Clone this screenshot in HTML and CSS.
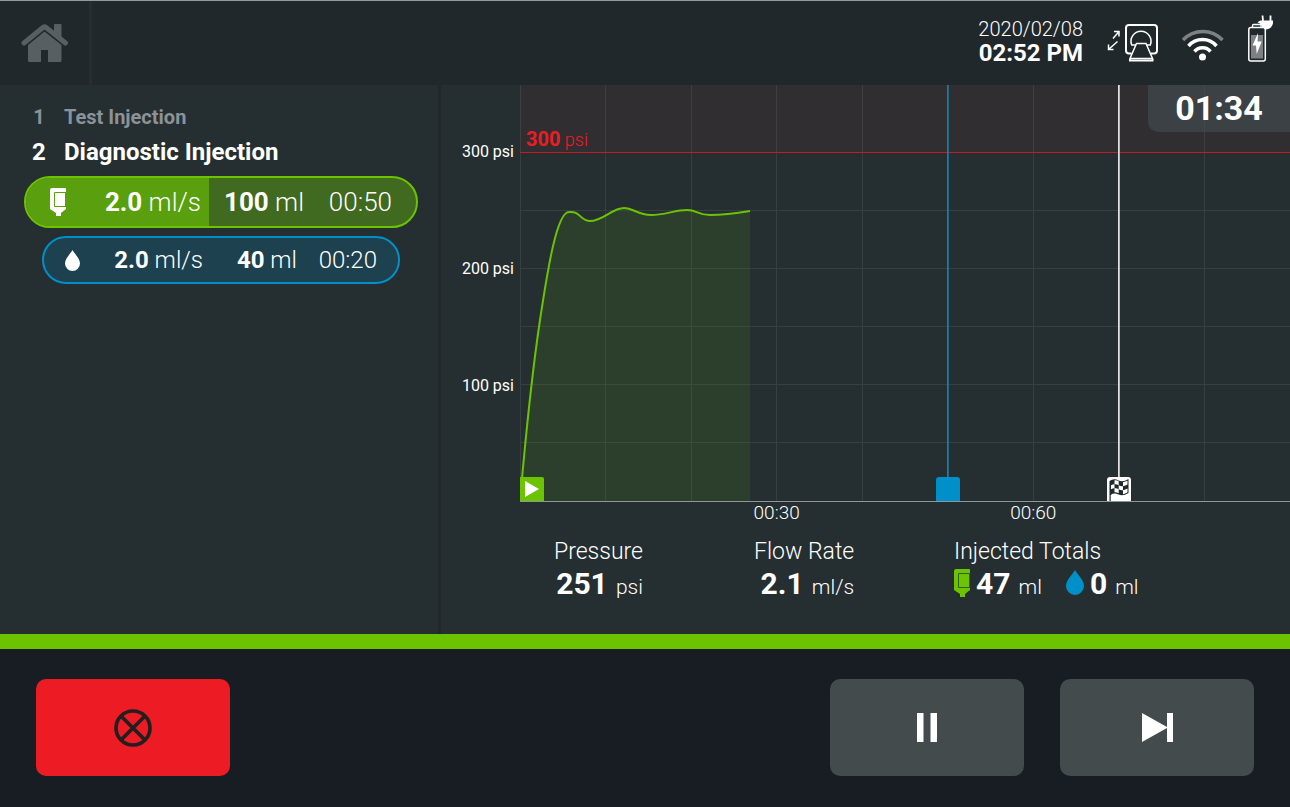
FILE: index.html
```html
<!DOCTYPE html>
<html lang="en">
<head>
<meta charset="utf-8">
<meta name="viewport" content="width=device-width, initial-scale=1">
<title>Diagnostic Injection</title>
<link rel="stylesheet" href="styles.css">
</head>
<body>
<svg class="defs" aria-hidden="true">
  <symbol id="bag" viewBox="0 0 16 28">
    <path d="M2 0H15Q16 0 16 1V21L11 25V28H6V25L0 21V2Q0 0 2 0Z" fill="currentColor"/>
    <path class="bag-line" d="M16 4.500H4.500V18.500H16M15.500 4.500V18.500"/>
  </symbol>
  <symbol id="drop" viewBox="0 0 18 25">
    <path d="M9 0C11 4 18 10 18 16A9 9 0 0 1 0 16C0 10 7 4 9 0Z" fill="currentColor"/>
  </symbol>
</svg>

<header class="topbar">
  <button class="home" type="button" aria-label="Home">
    <svg width="48" height="40" viewBox="21 23 48 40" aria-hidden="true">
      <path d="M54 25Q54 24 55 24H60.500Q61.500 24 61.500 25V38L54 32Z"/>
      <path class="home-roof" d="M24 43L43.300 27.200Q44.500 26.300 45.700 27.200L65.500 43"/>
      <path d="M28 45L44.500 31.500L61.500 45V60.500Q61.500 62 60 62H48V50H41V62H29.500Q28 62 28 60.500Z"/>
    </svg>
  </button>
  <div class="status">
    <div class="clock">
      <time class="clock-date">2020/02/08</time>
      <time class="clock-time">02:52 PM</time>
    </div>
    <svg class="status-icon" width="51" height="56" viewBox="1107 15 51 56" role="img" aria-label="Scanner connected">
      <g fill="none" stroke="#fff">
        <path stroke-width="1.500" d="M1113 38.500L1119 31.500M1114 31.500H1119V36.500M1117.500 41.500L1108.500 49.500M1108.500 44.500V49.500H1113.500"/>
        <path stroke-width="2" d="M1131.500 53.500H1129Q1126 53.500 1126 50.500V28Q1126 25 1129 25H1154Q1157 25 1157 28V50.500Q1157 53.500 1154 53.500H1151"/>
        <path stroke-width="1.500" d="M1136 45H1131.700A10 10 0 1 1 1150.300 45H1146"/>
        <path stroke-width="1.500" d="M1136.500 43.500H1146L1152.500 58.500H1130Z"/>
        <path stroke-width="2" d="M1130 59V60.500H1152.500V59"/>
      </g>
    </svg>
    <svg class="status-icon" width="42" height="56" viewBox="1182 15 42 56" role="img" aria-label="Wi-Fi">
      <g fill="none" stroke="#fff" stroke-width="3.500">
        <path stroke="#7c8183" d="M1183 40A27 27 0 0 1 1222.500 40"/>
        <path d="M1188.500 46A18.500 18.500 0 0 1 1216.500 46"/>
        <path d="M1194.500 51.500A10.500 10.500 0 0 1 1210.500 51.500"/>
      </g>
      <circle cx="1202.500" cy="57" r="3.500" fill="#fff"/>
    </svg>
    <svg class="status-icon" width="26" height="56" viewBox="1248 15 26 56" role="img" aria-label="Battery charging">
      <rect x="1251" y="35" width="12" height="23.500" fill="#7c8183"/>
      <rect x="1248.800" y="27.500" width="16.500" height="33.500" rx="2" fill="none" stroke="#fff" stroke-width="1.500"/>
      <path d="M1252.500 27V25.500Q1252.500 24.500 1253.500 24.500H1260Q1261 24.500 1261 25.500V27" fill="none" stroke="#fff" stroke-width="1.300"/>
      <path d="M1258 33L1252.500 45.500H1256L1256.700 54L1261.700 41.500H1257.600Z" fill="#fff"/>
      <path d="M1261 20.500H1273V23.500Q1271.500 29.500 1265.500 29.500Q1262 28 1260.500 24Q1259 22.500 1257.500 22.500Q1259 20.500 1261 20.500Z" fill="#fff"/>
      <path d="M1262.500 15.500L1263 21M1270.500 15.500V21" stroke="#fff" stroke-width="1.800"/>
    </svg>
  </div>
</header>

<main class="main">
  <section class="protocol" aria-label="Protocol">
    <ol class="steps">
      <li class="step"><span class="step-number">1</span>Test Injection</li>
      <li class="step step-current"><span class="step-number">2</span>Diagnostic Injection</li>
    </ol>
    <div class="phase phase-contrast">
      <div class="phase-progress" style="width: 47%"></div>
      <svg class="phase-icon" width="16" height="28" aria-hidden="true"><use href="#bag"/></svg>
      <span><b>2.0</b> ml/s</span>
      <span><b>100</b> ml</span>
      <span>00:50</span>
    </div>
    <div class="phase phase-saline">
      <svg class="phase-icon" width="15" height="21" aria-hidden="true"><use href="#drop"/></svg>
      <span><b>2.0</b> ml/s</span>
      <span><b>40</b> ml</span>
      <span>00:20</span>
    </div>
  </section>

  <section class="monitor" aria-label="Pressure">
    <div class="axis-y">
      <span>300 psi</span>
      <span>200 psi</span>
      <span>100 psi</span>
    </div>
    <div class="plot">
      <svg class="plot-canvas" viewBox="0 0 770 416" preserveAspectRatio="none" aria-hidden="true">
        <rect class="zone" width="770" height="68"/>
        <path class="grid" d="M.5 0V416M85.500 0V416M171 0V416M256.500 0V416M342 0V416M427.500 0V416M513.500 0V416M598.500 0V416M684.500 0V416M0 125.500H770M0 183.500H770M0 241.500H770M0 299.500H770M0 357.500H770"/>
        <path class="area" d="M0 416C4 370 12 288 20 235C28 182 37 127 49 127C61 126 60 136 70 136C83 136 92 123 104 123C113 123 118 130 131 130C145 130 155 125 167 125C177 125 178 130 190 130C205 130 218 128 230 126V416Z"/>
        <path class="limit" d="M0 67.500H770"/>
        <path class="curve" d="M0 416C4 370 12 288 20 235C28 182 37 127 49 127C61 126 60 136 70 136C83 136 92 123 104 123C113 123 118 130 131 130C145 130 155 125 167 125C177 125 178 130 190 130C205 130 218 128 230 126"/>
        <path class="mark mark-saline" d="M427.900 0V416"/>
        <path class="mark mark-end" d="M598.900 0V416"/>
      </svg>
      <div class="limit-label"><b>300</b> psi</div>
      <div class="elapsed">01:34</div>
      <svg class="flag flag-start" width="24" height="24" viewBox="0 0 24 24" aria-hidden="true">
        <path d="M0 0H22Q24 0 24 2V24H0Z" fill="#6cc300"/>
        <path d="M5 4L19 12L5 20Z" fill="#fff"/>
      </svg>
      <svg class="flag flag-saline" width="24" height="24" viewBox="0 0 24 24" aria-hidden="true">
        <path d="M0 24V3Q0 0 3 0H21Q24 0 24 3V24Z" fill="#0090c9"/>
      </svg>
      <svg class="flag flag-end" width="24" height="24" viewBox="0 0 24 24" aria-hidden="true">
        <path d="M0 24V3Q0 0 3 0H21Q24 0 24 3V24Z" fill="#fff"/>
        <path d="M2.500 4Q7 1 11.500 3.500Q16 5.500 21.500 2V16Q16 19.500 11.500 17.500Q7 15.500 3.700 18V24H2.500Z" fill="#20282b"/>
        <path d="M7.500 3.300Q9.800 3 11.700 4.200V8.200Q9.800 7 7.500 7.300ZM16 5.200Q18.500 4.800 20.500 3.800V7.500Q18.500 8.800 16 9.200ZM4 8.300Q5.700 7.400 7.500 7.300V11.300Q5.700 11.400 4 12.300ZM11.700 8.200Q13.800 9.500 16 9.200V13.200Q13.800 13.500 11.700 12.200ZM7.500 11.300Q9.800 11 11.700 12.200V16.200Q9.800 15.200 7.500 15.300ZM16 13.200Q18.500 12.800 20.500 11.500V15.200Q18.500 16.600 16 17.200Z" fill="#fff"/>
      </svg>
    </div>
    <div class="axis-x">
      <span>00:30</span>
      <span>00:60</span>
    </div>
    <dl class="stats">
      <div class="stat">
        <dt>Pressure</dt>
        <dd><span><b>251</b> psi</span></dd>
      </div>
      <div class="stat">
        <dt>Flow Rate</dt>
        <dd><span><b>2.1</b> ml/s</span></dd>
      </div>
      <div class="stat stat-totals">
        <dt>Injected Totals</dt>
        <dd>
          <span class="total"><svg class="total-contrast" width="16" height="28" aria-hidden="true"><use href="#bag"/></svg><span><b>47</b> ml</span></span>
          <span class="total"><svg class="total-saline" width="18" height="25" aria-hidden="true"><use href="#drop"/></svg><span><b>0</b> ml</span></span>
        </dd>
      </div>
    </dl>
  </section>
</main>

<footer class="controls">
  <button class="control control-stop" type="button" aria-label="Abort injection">
    <svg width="38" height="38" viewBox="0 0 38 38" aria-hidden="true">
      <g fill="none" stroke="#231f20" stroke-width="3.700"><circle cx="19" cy="19" r="17"/><path d="M7 7L31 31M31 7L7 31"/></g>
    </svg>
  </button>
  <button class="control" type="button" aria-label="Pause">
    <svg width="20" height="29" viewBox="0 0 20 29" aria-hidden="true"><path d="M0 0H6.500V29H0ZM13.500 0H20V29H13.500Z" fill="#fff"/></svg>
  </button>
  <button class="control" type="button" aria-label="Next phase">
    <svg width="31" height="29" viewBox="0 0 31 29" aria-hidden="true"><path d="M0 0L25 14V0H31V29H25V15L0 29Z" fill="#fff"/></svg>
  </button>
</footer>
</body>
</html>
```

FILE: styles.css
```css
* { box-sizing: border-box; }

body {
  margin: 0;
  min-height: 100vh;
  display: flex;
  flex-direction: column;
  background: #181c23;
  color: #fff;
  font-family: Roboto, "Liberation Sans", sans-serif;
  font-weight: 300;
}

b { font-weight: 700; }
svg { display: block; flex: none; }
.defs { position: absolute; width: 0; height: 0; }
.bag-line { fill: none; stroke: var(--bag-line, #35621b); stroke-width: 1; }

/* Top bar */
.topbar {
  display: flex;
  align-items: stretch;
  justify-content: space-between;
  min-height: 85px;
  border-top: 1px solid #919b9d;
  background: #20282b;
}
.home {
  display: flex;
  align-items: center;
  width: 92px;
  padding: 0 0 0 21px;
  border: 0;
  border-right: 3px solid #252f31;
  background: none;
  fill: #575f62;
}
.home-roof { fill: none; stroke: #575f62; stroke-width: 5; stroke-linecap: round; }
.status {
  display: flex;
  align-items: center;
  gap: 24px;
  padding-right: 16px;
}
.clock {
  display: flex;
  flex-direction: column;
  align-items: flex-end;
  padding-bottom: 4px;
  line-height: 24px;
}
.clock-date { font-size: 20px; }
.clock-time { font-size: 24px; font-weight: 700; }

/* Body */
.main {
  flex: 1;
  display: flex;
  background: #252f31;
  border-bottom: 15px solid #6cc300;
}
.protocol {
  width: 441px;
  padding: 15px 20px 24px 24px;
  border-right: 3px solid #20282b;
}
.steps {
  margin: 0 0 6px;
  padding: 0;
  list-style: none;
}
.step {
  display: flex;
  gap: 10px;
  color: #8b9298;
  font-size: 20px;
  font-weight: 700;
  line-height: 35px;
}
.step-number { width: 30px; text-align: center; }
.step-current { color: #fff; font-size: 24px; }

.phase {
  position: relative;
  display: grid;
  align-items: center;
  text-align: right;
  overflow: hidden;
  border: 2px solid;
}
.phase-contrast {
  --bag-line: #5a9f0d;
  grid-template-columns: 16px 1fr 103px 88px;
  height: 52px;
  padding: 0 24px;
  border-color: #6cc300;
  border-radius: 26px;
  background: #406a1f;
  font-size: 26px;
}
.phase-contrast > * { position: relative; }
.phase-contrast .phase-progress {
  position: absolute;
  inset: 0 auto 0 0;
  background: #5a9f0d;
}
.phase-saline {
  grid-template-columns: 15px 1fr 94px 80px;
  height: 48px;
  margin: 8px 18px 0;
  padding: 0 21px;
  border-color: #0090c9;
  border-radius: 24px;
  background: #1d414f;
  font-size: 24px;
}
.phase-icon { color: #fff; }

/* Chart */
.monitor {
  flex: 1;
  display: grid;
  grid-template-columns: 79px 1fr;
  grid-template-rows: 1fr auto auto;
}
.axis-y {
  display: grid;
  grid-template-rows: 67fr 117fr 116fr 116fr;
  padding-right: 6px;
  text-align: right;
  font-size: 16px;
  font-weight: 400;
  line-height: 20px;
}
.axis-y span { align-self: end; margin-bottom: -10px; }
.plot {
  position: relative;
  min-height: 240px;
  border-bottom: 1px solid #8f9697;
}
.plot-canvas { position: absolute; width: 100%; height: 100%; }
.plot-canvas path { fill: none; vector-effect: non-scaling-stroke; }
.zone { fill: #302e31; }
.grid { stroke: #fff; stroke-opacity: .08; }
.plot-canvas .area { fill: #6cc300; fill-opacity: .1; }
.limit { stroke: #c51c24; }
.curve { stroke: #6cc300; stroke-width: 2; }
.mark { stroke-width: 1.5; }
.mark-saline { stroke: #118ac0; }
.mark-end { stroke: #fff; }
.grid, .limit { shape-rendering: crispEdges; }
.limit-label {
  position: absolute;
  left: 6px;
  bottom: 84%;
  color: #ed1c24;
  font-size: 18px;
  line-height: 24px;
}
.limit-label b { font-size: 20px; }
.elapsed {
  position: absolute;
  top: 0;
  right: 0;
  width: 142px;
  border-bottom-left-radius: 10px;
  background: rgba(67, 79, 81, .6);
  font-size: 34px;
  font-weight: 700;
  line-height: 47px;
  text-align: center;
}
.flag { position: absolute; bottom: 0; }
.flag-start { left: 0; }
.flag-saline { left: 55.6%; margin-left: -12px; }
.flag-end { left: 77.8%; margin-left: -12px; }
.axis-x {
  grid-column: 2;
  display: flex;
  padding: 0 16.667%;
  font-size: 19px;
  line-height: 22px;
}
.axis-x span { flex: 1; text-align: center; }

/* Readings */
.stats {
  grid-column: 2;
  display: grid;
  grid-template-columns: 200px 200px 1fr;
  margin: 0;
  padding: 14px 0 29px 34px;
}
.stat { width: fit-content; text-align: right; }
.stat-totals { text-align: left; }
.stat dt { font-size: 23px; line-height: 28px; }
.stat dd {
  margin: 0;
  font-size: 21px;
  line-height: 36px;
}
.stat b { margin-right: 3px; font-size: 30px; }
.stat-totals dd { display: flex; gap: 24px; }
.total { display: flex; align-items: center; gap: 6px; }
.total svg { margin-bottom: 6px; }
.total-contrast { color: #6cc300; }
.total-saline { color: #0090c9; }

/* Controls */
.controls {
  display: flex;
  gap: 36px;
  padding: 30px 36px 31px;
}
.control {
  display: flex;
  align-items: center;
  justify-content: center;
  width: 194px;
  height: 97px;
  padding: 0;
  border: 0;
  border-radius: 10px;
  background: #434b4d;
}
.control-stop { margin-right: auto; background: #ed1c24; }
```
